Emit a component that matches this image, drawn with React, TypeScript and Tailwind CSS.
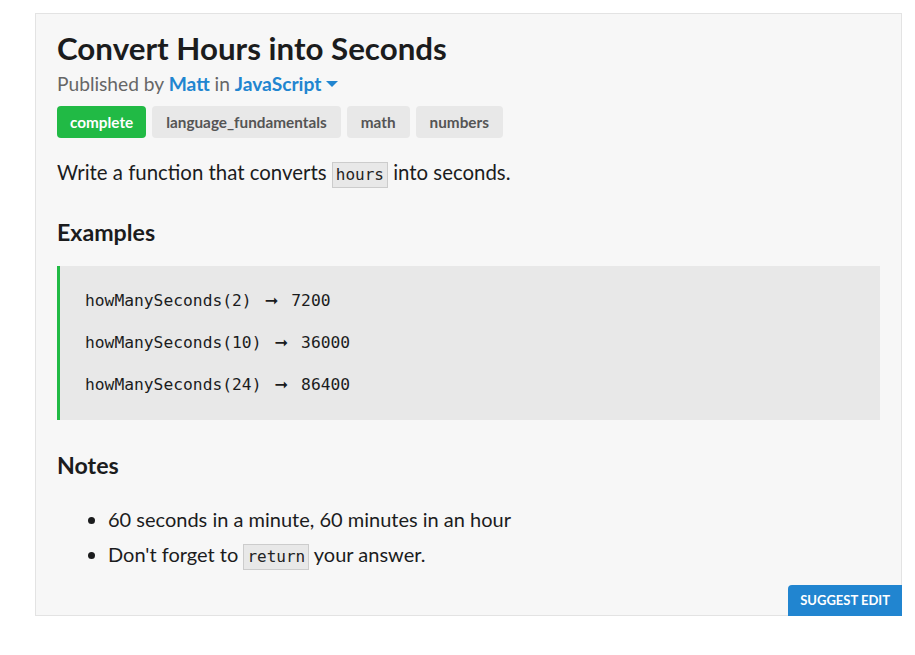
// challenge description card
import React from "react";

const tags = ["language_fundamentals", "math", "numbers"];

const examples = [
  { call: "howManySeconds(2)", result: "7200" },
  { call: "howManySeconds(10)", result: "36000" },
  { call: "howManySeconds(24)", result: "86400" },
];

const Code = ({ children }: { children: React.ReactNode }) => (
  <code className="inline-block bg-[#e8e8e8] border border-[#cccccc] px-[3px] leading-[24px] text-[16px] text-[#222] font-['DejaVu_Sans_Mono',monospace] align-middle">
    {children}
  </code>
);

const App = () => {
  return (
    <div className="min-h-[655px] bg-white font-['Lato',sans-serif] pt-[13px] pl-[35px]">
      <div className="relative w-[867px] bg-[#f7f7f7] border border-[#e3e3e3] pl-[21px] pr-[21px] pt-[14px] pb-[45px]">
        <h1 className="text-[31.3px] font-bold text-[#1b1c1d] leading-[40px]">
          Convert Hours into Seconds
        </h1>
        <div className="text-[19.2px] text-[#666] leading-[24px] mt-[4px] flex items-center">
          Published by&nbsp;<span className="font-bold text-[#2185d0]">Matt</span>
          &nbsp;in&nbsp;
          <span className="font-bold text-[#2185d0]">JavaScript</span>
          <svg width="12" height="6" viewBox="0 0 12 6" className="ml-[5px]">
            <path d="M0 0 L12 0 L6 6 Z" fill="#2185d0" />
          </svg>
        </div>

        <div className="flex gap-[6px] mt-[10px]">
          <span className="h-[32px] px-[13px] rounded-[4px] bg-[#21ba45] text-white text-[15.3px] font-bold flex items-center">
            complete
          </span>
          {tags.map((t) => (
            <span
              key={t}
              className="h-[32px] px-[14px] rounded-[4px] bg-[#e8e8e8] text-[#555] text-[15.3px] font-bold flex items-center"
            >
              {t}
            </span>
          ))}
        </div>

        <p className="text-[20.4px] text-[#1b1c1d] mt-[20px] leading-[28px]">
          Write a function that converts <Code>hours</Code> into seconds.
        </p>

        <h2 className="text-[23.2px] font-bold text-[#1b1c1d] mt-[30px] leading-[28px]">
          Examples
        </h2>

        <div className="mt-[20px] bg-[#e8e8e8] border-l-[3px] border-[#21ba45] pl-[25px] pt-[23px] pb-[23px] font-['DejaVu_Sans_Mono',monospace] text-[16.3px] text-[#1b1c1d]">
          {examples.map((ex) => (
            <div key={ex.call} className="leading-[24px] mb-[18px] last:mb-0">
              {ex.call}
              <span className="font-['DejaVu_Sans',sans-serif] mx-[13px]">➞</span>
              {ex.result}
            </div>
          ))}
        </div>

        <h2 className="text-[23.2px] font-bold text-[#1b1c1d] mt-[31px] leading-[28px]">
          Notes
        </h2>

        <ul className="list-disc pl-[51px] mt-[26px] text-[20px] text-[#1b1c1d]">
          <li className="leading-[28px] mb-[7px]">60 seconds in a minute, 60 minutes in an hour</li>
          <li className="leading-[28px]">
            Don't forget to <Code>return</Code> your answer.
          </li>
        </ul>

        <button className="absolute right-[-1px] bottom-[-1px] h-[31px] px-[12px] bg-[#2185d0] text-white text-[13px] font-bold uppercase rounded-tl-[4px]">
          Suggest Edit
        </button>
      </div>
    </div>
  );
};

export default App;
